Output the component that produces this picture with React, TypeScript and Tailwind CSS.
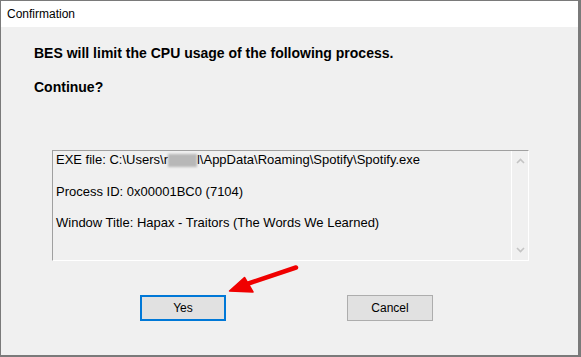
import React from "react";

export default function App() {
  return (
    <div className="relative w-[581px] h-[357px] bg-[#7a7a7a] overflow-hidden" style={{ fontFamily: '"Liberation Sans", Arial, sans-serif' }}>
      <div className="ml-px mt-px w-[577px] h-[354px] bg-[#f0f0f0] flex flex-col">
        <div className="h-[26px] bg-white flex items-center pl-[6px] text-[12px] text-black">Confirmation</div>
        <div className="flex flex-col">
          <div className="pl-[33px] pt-[17px] text-[14px] font-bold text-black leading-[18px]">BES will limit the CPU usage of the following process.</div>
          <div className="pl-[33px] pt-[16px] text-[14px] font-bold text-black leading-[18px]">Continue?</div>
          <div className="ml-[51px] mt-[54px] w-[477px] h-[111px] border-t border-l border-[#a0a0a0] border-b border-r border-b-white border-r-white flex">
            <div className="flex-1 pl-[3px] pt-[1px] text-[13px] text-black leading-[16px] flex flex-col gap-[15.5px]">
              <div className="flex items-center">
                <span>EXE file: C:\Users\r</span>
                <span className="inline-block w-[29px] h-[13px] bg-[#b8b8b8] blur-[1px]"></span>
                <span>l\AppData\Roaming\Spotify\Spotify.exe</span>
              </div>
              <div>Process ID: 0x00001BC0 (7104)</div>
              <div>Window Title: Hapax - Traitors (The Words We Learned)</div>
            </div>
            <div className="w-[17px] border-l border-white flex flex-col justify-between items-center py-[7px]">
              <svg width="9" height="6" viewBox="0 0 9 6"><path d="M1 5 L4.5 1.5 L8 5" stroke="#c4c4c4" strokeWidth="1.6" fill="none" /></svg>
              <svg width="9" height="6" viewBox="0 0 9 6"><path d="M1 1 L4.5 4.5 L8 1" stroke="#c4c4c4" strokeWidth="1.6" fill="none" /></svg>
            </div>
          </div>
          <div className="flex mt-[34px]">
            <div className="ml-[139px] w-[86px] h-[26px] border-2 border-[#0078d7] bg-[#e1e1e1] flex items-center justify-center text-[12px] text-black">Yes</div>
            <div className="ml-[121px] w-[86px] h-[26px] border border-[#adadad] bg-[#e1e1e1] flex items-center justify-center text-[12px] text-black">Cancel</div>
          </div>
        </div>
      </div>
      <svg className="absolute left-0 top-0" width="581" height="357" viewBox="0 0 581 357">
        <path d="M296 267.5 L247 284" stroke="#f00000" strokeWidth="4.5" strokeLinecap="round" />
        <path d="M229.5 291 L244.5 277.5 L253 292 Z" fill="#f00000" stroke="#f00000" strokeWidth="1.5" strokeLinejoin="round" />
      </svg>
    </div>
  );
}
